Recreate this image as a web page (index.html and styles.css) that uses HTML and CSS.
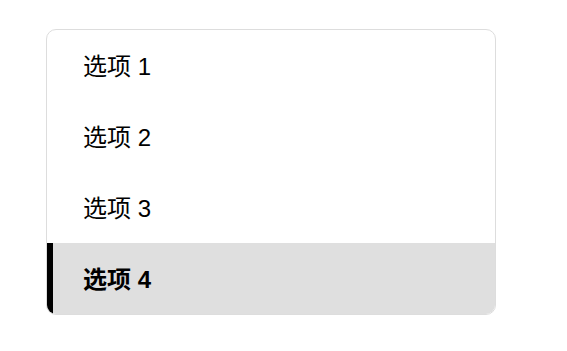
FILE: index.html
```html
<!DOCTYPE html>
<html lang="zh">
<head>
<meta charset="utf-8">
<title>Menu</title>
<link rel="stylesheet" href="styles.css">
</head>
<body>
<ul class="menu">
  <li class="item">选项 1</li>
  <li class="item">选项 2</li>
  <li class="item">选项 3</li>
  <li class="item active">选项 4</li>
</ul>
</body>
</html>
```
FILE: styles.css
```css
html, body {
  margin: 0;
  padding: 0;
  background: #ffffff;
}
body {
  padding: 29px 0 0 46px;
  font-family: "Liberation Sans", "Noto Sans CJK SC", sans-serif;
}
.menu {
  list-style: none;
  margin: 0;
  padding: 0;
  width: 448px;
  border: 1px solid #dddddd;
  border-radius: 10px;
  overflow: hidden;
  background: #ffffff;
}
.item {
  font-size: 24px;
  line-height: 27px;
  padding: 23px 0 21px 30px;
  border-left: 6px solid transparent;
  color: #000000;
}
.item.active {
  background: #dfdfdf;
  border-left-color: #000000;
  font-weight: bold;
}
```
